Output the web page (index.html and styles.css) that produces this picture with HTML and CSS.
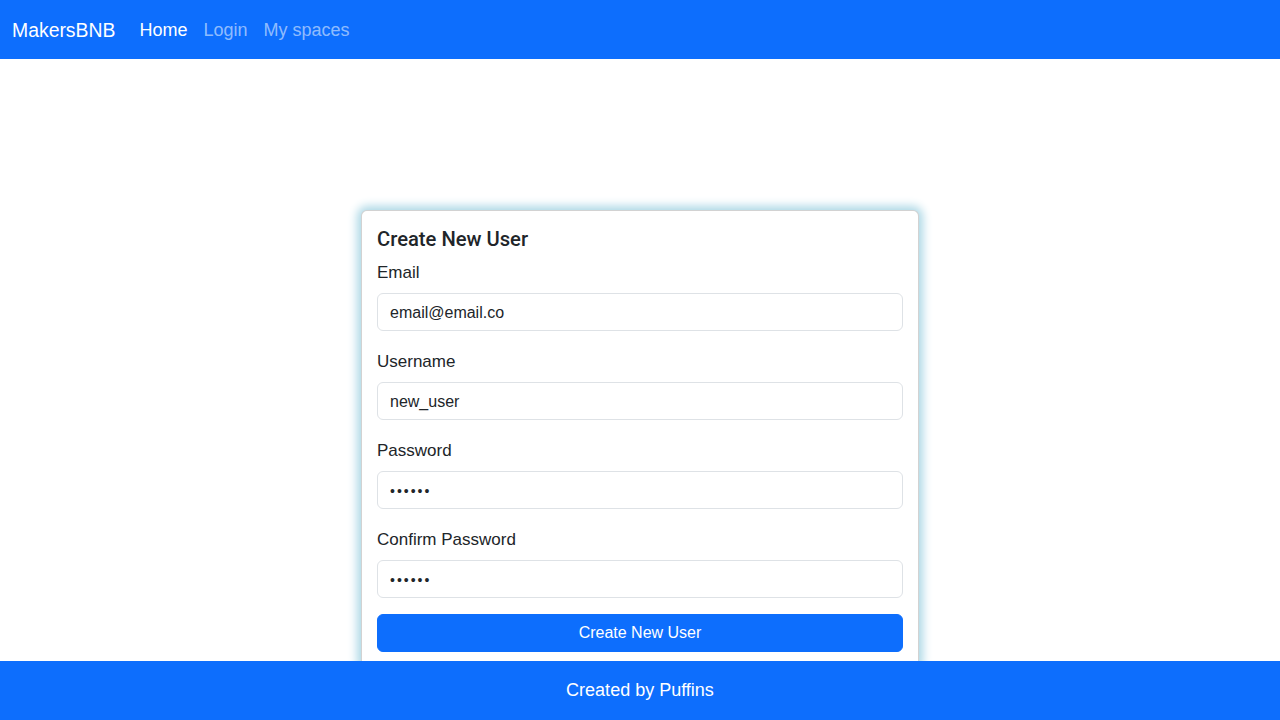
FILE: index.html
```html
<!DOCTYPE html>
<html lang="en">
<head>
<meta charset="utf-8">
<title>MakersBNB</title>
<link rel="stylesheet" href="styles.css">
</head>
<body>
<nav class="navbar">
  <a class="brand" href="#">MakersBNB</a>
  <ul class="nav-links">
    <li><a class="nav-link active" href="#">Home</a></li>
    <li><a class="nav-link" href="#">Login</a></li>
    <li><a class="nav-link" href="#">My spaces</a></li>
  </ul>
</nav>
<main class="main">
  <div class="card">
    <h5 class="card-title">Create New User</h5>
    <form class="form">
      <div class="group">
        <label class="label">Email</label>
        <input class="input" type="text" value="email@email.co">
      </div>
      <div class="group">
        <label class="label">Username</label>
        <input class="input" type="text" value="new_user">
      </div>
      <div class="group">
        <label class="label">Password</label>
        <input class="input" type="password" value="secret">
      </div>
      <div class="group last">
        <label class="label">Confirm Password</label>
        <input class="input" type="password" value="secret">
      </div>
      <button class="btn" type="button">Create New User</button>
    </form>
  </div>
</main>
<footer class="footer">Created by Puffins</footer>
</body>
</html>
```
FILE: styles.css
```css
* { box-sizing: border-box; }
html, body { margin: 0; padding: 0; }
body {
  font-family: "Liberation Sans", Arial, sans-serif;
  font-size: 16px;
  line-height: 1.5;
  color: #212529;
  background: #fff;
  height: 720px;
  overflow: hidden;
}
.navbar {
  background: #0d6efd;
  height: 59px;
  display: flex;
  align-items: center;
  padding: 0 12px;
}
.brand {
  color: #fff;
  font-size: 19.4px;
  text-decoration: none;
  margin-right: 16px;
  line-height: 30px;
}
.nav-links {
  list-style: none;
  margin: 0;
  padding: 0;
  display: flex;
}
.nav-link {
  display: block;
  padding: 8px;
  color: rgba(255,255,255,0.55);
  text-decoration: none;
  font-size: 18px;
  line-height: 24px;
}
.nav-link.active { color: #fff; }
.main {
  display: flex;
  justify-content: center;
  padding-top: 151px;
}
.card {
  width: 558px;
  background: #fff;
  border: 1px solid rgba(0,0,0,0.175);
  border-radius: 6px;
  box-shadow: 0 0 10px 4px #add8e6;
  padding: 16px 15px 15px;
}
.card-title {
  margin: 0 0 10px;
  font-family: Roboto, "Liberation Sans", sans-serif;
  font-size: 20.2px;
  font-weight: 500;
  line-height: 24px;
}
.group { margin-bottom: 19px; }
.group.last { margin-bottom: 16px; }
.label {
  display: block;
  margin-bottom: 8px;
  font-size: 17px;
  line-height: 24px;
}
.input {
  display: block;
  width: 100%;
  height: 38px;
  padding: 7px 12px 5px;
  font-family: inherit;
  font-size: 16px;
  color: #212529;
  border: 1px solid #dee2e6;
  border-radius: 6px;
  background: #fff;
}
.input[type="password"] { letter-spacing: 2px; font-size: 14px; }
.btn {
  display: block;
  width: 100%;
  height: 38px;
  background: #0d6efd;
  color: #fff;
  border: 1px solid #0d6efd;
  border-radius: 6px;
  font-family: inherit;
  font-size: 16px;
}
.footer {
  position: fixed;
  left: 0;
  right: 0;
  bottom: 0;
  height: 59px;
  background: #0d6efd;
  color: #fff;
  display: flex;
  align-items: center;
  justify-content: center;
  font-size: 18px;
}
```
